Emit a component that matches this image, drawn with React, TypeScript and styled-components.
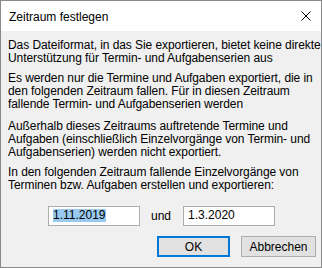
import React from "react";
import styled, { createGlobalStyle } from "styled-components";

const GlobalStyle = createGlobalStyle`
  html, body {
    margin: 0;
    padding: 0;
    background: #ffffff;
  }
  * {
    box-sizing: border-box;
  }
`;

const paragraphs: { lines: string[]; gap: number }[] = [
  {
    lines: [
      "Das Dateiformat, in das Sie exportieren, bietet keine direkte",
      "Unterstützung für Termin- und Aufgabenserien aus",
    ],
    gap: 0,
  },
  {
    lines: [
      "Es werden nur die Termine und Aufgaben exportiert, die in",
      "den folgenden Zeitraum fallen. Für in diesen Zeitraum",
      "fallende Termin- und Aufgabenserien werden",
    ],
    gap: 7,
  },
  {
    lines: [
      "Außerhalb dieses Zeitraums auftretende Termine und",
      "Aufgaben (einschließlich Einzelvorgänge von Termin- und",
      "Aufgabenserien) werden nicht exportiert.",
    ],
    gap: 9,
  },
  {
    lines: [
      "In den folgenden Zeitraum fallende Einzelvorgänge von",
      "Terminen bzw. Aufgaben erstellen und exportieren:",
    ],
    gap: 7,
  },
];

const App: React.FC = () => {
  return (
    <>
      <GlobalStyle />
      <Window>
        <TitleBar>
          <Title>Zeitraum festlegen</Title>
          <CloseButton>
            <svg width="10" height="10" viewBox="0 0 10 10">
              <path d="M0.5 0.5 L9.5 9.5 M9.5 0.5 L0.5 9.5" stroke="#000" strokeWidth="1" fill="none" />
            </svg>
          </CloseButton>
        </TitleBar>
        <Body>
          {paragraphs.map((p, i) => (
            <Paragraph key={i} $gap={p.gap}>
              {p.lines.map((l, j) => (
                <Line key={j}>{l}</Line>
              ))}
            </Paragraph>
          ))}
          <DateRow>
            <DateField>
              <Selected>1.11.2019</Selected>
            </DateField>
            <Label>und</Label>
            <DateField>1.3.2020</DateField>
          </DateRow>
          <ButtonRow>
            <Button $primary>OK</Button>
            <Button>Abbrechen</Button>
          </ButtonRow>
        </Body>
      </Window>
    </>
  );
};

export default App;

const Window = styled.div`
  width: 322px;
  height: 268px;
  border: 1px solid #8a8a8a;
  display: flex;
  flex-direction: column;
  font-family: "Liberation Sans", Arial, sans-serif;
  font-size: 12px;
  color: #000;
`;

const TitleBar = styled.div`
  height: 30px;
  background: #fff;
  display: flex;
  align-items: center;
  justify-content: space-between;
  padding: 1px 10px 0 8px;
`;

const Title = styled.div`
  font-size: 12px;
`;

const CloseButton = styled.div`
  display: flex;
  align-items: center;
  justify-content: center;
  width: 10px;
  height: 10px;
  margin-top: -2px;
`;

const Body = styled.div`
  flex: 1;
  background: #f0f0f0;
  padding: 8px 5px 0 7px;
  display: flex;
  flex-direction: column;
`;

const Paragraph = styled.div<{ $gap: number }>`
  margin-top: ${(p) => p.$gap}px;
  line-height: 13px;
  letter-spacing: -0.07px;
`;

const Line = styled.div`
  white-space: nowrap;
`;

const DateRow = styled.div`
  display: flex;
  align-items: center;
  gap: 11px;
  margin-top: 14px;
  padding-left: 40px;
`;

const DateField = styled.div`
  width: 92px;
  height: 20px;
  border: 1px solid #adadad;
  background: #fff;
  padding: 2px 4px 0;
  line-height: 13px;
  white-space: nowrap;
`;

const Selected = styled.span`
  display: inline-block;
  background: #99c9ef;
  height: 13px;
`;

const Label = styled.div`
  margin-right: 1px;
`;

const ButtonRow = styled.div`
  display: flex;
  justify-content: flex-end;
  gap: 11px;
  margin-top: 10px;
`;

const Button = styled.div<{ $primary?: boolean }>`
  width: ${(p) => (p.$primary ? 73 : 75)}px;
  height: 21px;
  display: flex;
  align-items: center;
  justify-content: center;
  background: #e1e1e1;
  border: ${(p) => (p.$primary ? "2px solid #0078d7" : "1px solid #adadad")};
  font-size: 12px;
`;
